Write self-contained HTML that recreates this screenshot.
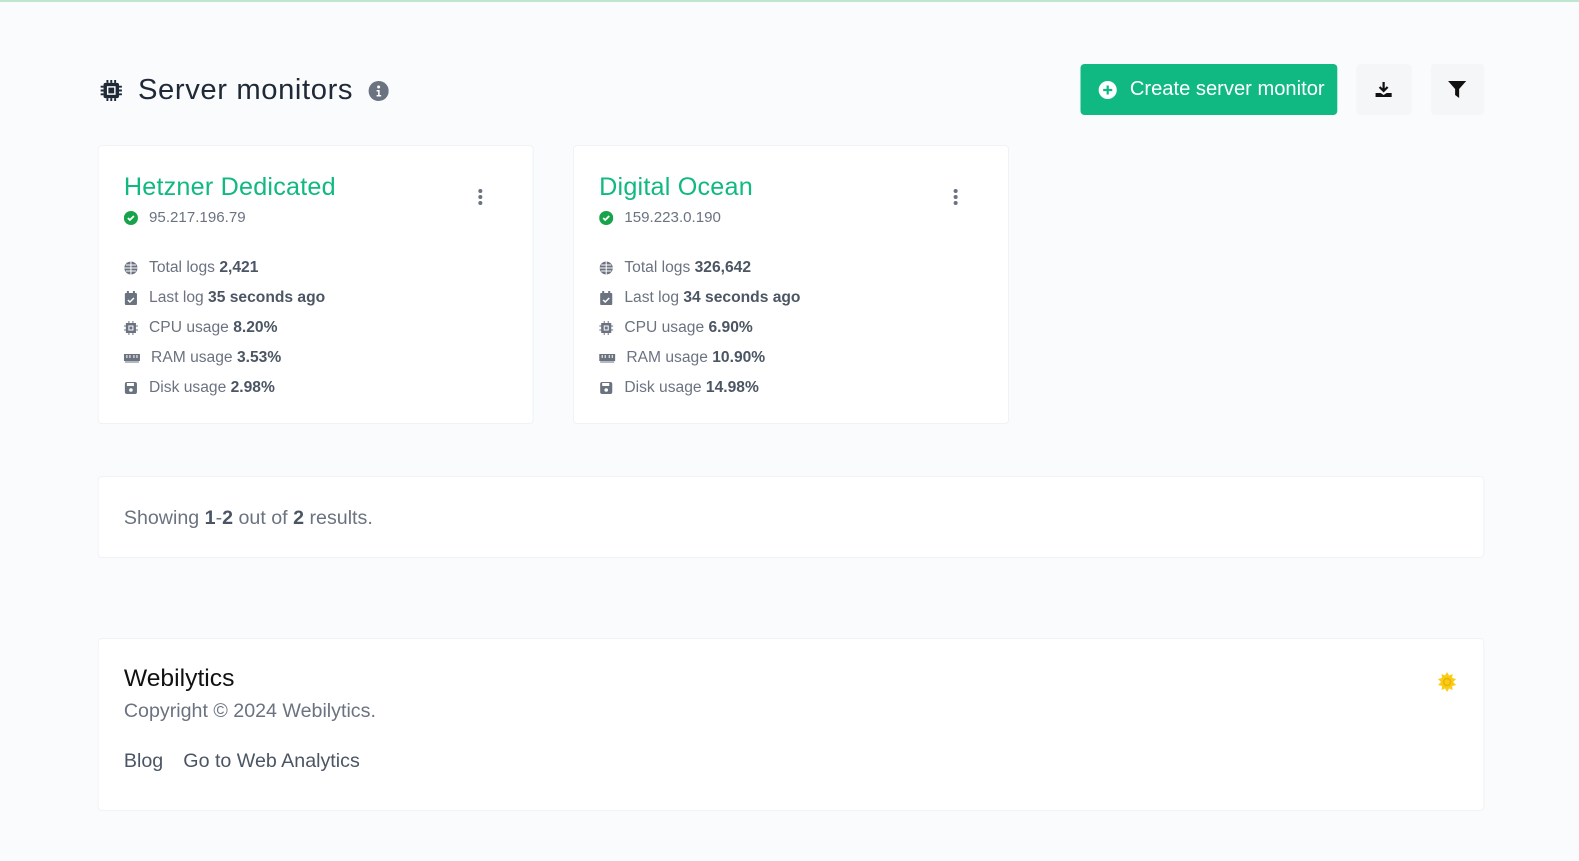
<!DOCTYPE html>
<html><head><meta charset="utf-8"><style>
*{box-sizing:border-box;margin:0;padding:0}
body{width:1579px;height:861px;background:#f9fbfd;font-family:"Liberation Sans",sans-serif;color:#4b5563;position:relative;overflow:hidden;border-top:2px solid #bfe6cf}
#w{position:absolute;left:0;top:0;width:1568px;height:855px;transform:scale(1.007,1);transform-origin:0 0}
.abs{position:absolute}
.card{position:absolute;background:#fff;border:1px solid #f0f2f5;border-radius:4px}
h1{position:absolute;left:137px;top:72px;font-size:29px;font-weight:400;color:#1f2937;letter-spacing:0.6px}
.name{position:absolute;left:25px;top:27px;font-size:25px;color:#10b981;letter-spacing:0.2px}
.ip{position:absolute;left:25px;top:63px;font-size:15px;color:#6b7280;display:flex;align-items:center;gap:11px}
.row{position:absolute;left:25px;font-size:15.5px;color:#6b7280;display:flex;align-items:center;gap:11px}
.row b{color:#4b5563}
.dots{position:absolute;left:377px;top:43px;width:4px}
.dots i{display:block;width:4px;height:4px;border-radius:2px;background:#6b7280;margin-bottom:2px}
</style></head><body><div id="w">
<svg class="abs" style="left:99px;top:77px" width="23" height="23" viewBox="0 0 24 24"><rect x="4" y="4" width="16" height="16" rx="2" fill="#1f2937"/><rect x="7.5" y="7.5" width="9" height="9" fill="#fff"/><rect x="9" y="9" width="6" height="6" fill="#1f2937"/><g stroke="#1f2937" stroke-width="2"><path d="M8 1v3M12 1v3M16 1v3M8 20v3M12 20v3M16 20v3M1 8h3M1 12h3M1 16h3M20 8h3M20 12h3M20 16h3"/></g></svg>
<h1>Server monitors</h1>
<svg class="abs" style="left:366px;top:79px" width="20" height="20" viewBox="0 0 20 20"><circle cx="10" cy="10" r="10" fill="#6b7280"/><circle cx="10" cy="6" r="1.5" fill="#fff"/><path d="M8 9h3v5h1.5v1.5h-4.5V14H9.5v-3.5H8z" fill="#fff"/></svg>
<div class="abs" style="left:1073px;top:62px;width:255px;height:51px;background:#10b981;border-radius:4px;color:#fff;font-size:20px;display:flex;align-items:center;padding-left:17px;gap:12px"><svg width="20" height="20" viewBox="0 0 20 20"><circle cx="10" cy="10" r="9" fill="#fff"/><path d="M10 5.5v9M5.5 10h9" stroke="#10b981" stroke-width="2.2"/></svg>Create server monitor</div>
<div class="abs" style="left:1347px;top:62px;width:55px;height:51px;background:#f5f6f8;border-radius:4px"><svg class="abs" style="left:18px;top:17px" width="18" height="18" viewBox="0 0 18 18"><path d="M9 1v9M5 6l4 4 4-4" stroke="#111" stroke-width="2.2" fill="none"/><path d="M1 12h5l3 2 3-2h5v4H1z" fill="#111"/></svg></div>
<div class="abs" style="left:1421px;top:62px;width:53px;height:51px;background:#f5f6f8;border-radius:4px"><svg class="abs" style="left:17px;top:17px" width="18" height="17" viewBox="0 0 18 17"><path d="M0 0h18l-7 8v9l-4-3V8z" fill="#111"/></svg></div>

<div class="card" style="left:97px;top:143px;width:433px;height:279px">
<div class="name">Hetzner Dedicated</div>
<div class="dots"><i></i><i></i><i></i></div>
<div class="ip"><svg width="14" height="14"><circle cx="7" cy="7" r="7" fill="#16a34a"/><path d="M4 7l2 2 4-4" stroke="#fff" stroke-width="1.8" fill="none"/></svg>95.217.196.79</div>
<div class="row" style="top:113px"><svg width="14" height="14" viewBox="0 0 14 14"><circle cx="7" cy="7" r="6.5" fill="#6b7280"/><path d="M0.5 7h13M7 .5v13M2 4h10M2 10h10" stroke="#fff" stroke-width="1"/></svg><span>Total logs <b>2,421</b></span></div>
<div class="row" style="top:143px"><svg width="14" height="14"><rect x="1" y="2" width="12" height="12" rx="1" fill="#6b7280"/><rect x="3" y="0" width="2" height="3" fill="#6b7280"/><rect x="9" y="0" width="2" height="3" fill="#6b7280"/><path d="M4 9l2 2 4-4" stroke="#fff" stroke-width="1.5" fill="none"/></svg><span>Last log <b>35 seconds ago</b></span></div>
<div class="row" style="top:173px"><svg width="14" height="14"><rect x="2" y="2" width="10" height="10" fill="#6b7280"/><path d="M5 0v14M9 0v14M0 5h14M0 9h14" stroke="#6b7280" stroke-width="1"/><rect x="4.5" y="4.5" width="5" height="5" fill="#fff"/><rect x="5.5" y="5.5" width="3" height="3" fill="#6b7280"/></svg><span>CPU usage <b>8.20%</b></span></div>
<div class="row" style="top:203px"><svg width="16" height="14"><rect x="0" y="3" width="16" height="7" fill="#6b7280"/><path d="M3 4v3M6 4v3M10 4v3M13 4v3" stroke="#fff"/><path d="M1 11h14" stroke="#6b7280"/></svg><span>RAM usage <b>3.53%</b></span></div>
<div class="row" style="top:233px"><svg width="14" height="14"><rect x="1" y="1" width="12" height="12" rx="2" fill="#6b7280"/><rect x="3" y="2" width="7" height="3" fill="#fff"/><circle cx="7" cy="9" r="1.8" fill="#fff"/></svg><span>Disk usage <b>2.98%</b></span></div>
</div>

<div class="card" style="left:569px;top:143px;width:433px;height:279px">
<div class="name">Digital Ocean</div>
<div class="dots"><i></i><i></i><i></i></div>
<div class="ip"><svg width="14" height="14"><circle cx="7" cy="7" r="7" fill="#16a34a"/><path d="M4 7l2 2 4-4" stroke="#fff" stroke-width="1.8" fill="none"/></svg>159.223.0.190</div>
<div class="row" style="top:113px"><svg width="14" height="14" viewBox="0 0 14 14"><circle cx="7" cy="7" r="6.5" fill="#6b7280"/><path d="M0.5 7h13M7 .5v13M2 4h10M2 10h10" stroke="#fff" stroke-width="1"/></svg><span>Total logs <b>326,642</b></span></div>
<div class="row" style="top:143px"><svg width="14" height="14"><rect x="1" y="2" width="12" height="12" rx="1" fill="#6b7280"/><rect x="3" y="0" width="2" height="3" fill="#6b7280"/><rect x="9" y="0" width="2" height="3" fill="#6b7280"/><path d="M4 9l2 2 4-4" stroke="#fff" stroke-width="1.5" fill="none"/></svg><span>Last log <b>34 seconds ago</b></span></div>
<div class="row" style="top:173px"><svg width="14" height="14"><rect x="2" y="2" width="10" height="10" fill="#6b7280"/><path d="M5 0v14M9 0v14M0 5h14M0 9h14" stroke="#6b7280" stroke-width="1"/><rect x="4.5" y="4.5" width="5" height="5" fill="#fff"/><rect x="5.5" y="5.5" width="3" height="3" fill="#6b7280"/></svg><span>CPU usage <b>6.90%</b></span></div>
<div class="row" style="top:203px"><svg width="16" height="14"><rect x="0" y="3" width="16" height="7" fill="#6b7280"/><path d="M3 4v3M6 4v3M10 4v3M13 4v3" stroke="#fff"/><path d="M1 11h14" stroke="#6b7280"/></svg><span>RAM usage <b>10.90%</b></span></div>
<div class="row" style="top:233px"><svg width="14" height="14"><rect x="1" y="1" width="12" height="12" rx="2" fill="#6b7280"/><rect x="3" y="2" width="7" height="3" fill="#fff"/><circle cx="7" cy="9" r="1.8" fill="#fff"/></svg><span>Disk usage <b>14.98%</b></span></div>
</div>

<div class="card" style="left:97px;top:474px;width:1377px;height:82px">
<div class="abs" style="left:25px;top:30px;font-size:19.5px;color:#6b7280">Showing <b style="color:#4b5563">1</b>-<b style="color:#4b5563">2</b> out of <b style="color:#4b5563">2</b> results.</div>
</div>

<div class="card" style="left:97px;top:636px;width:1377px;height:173px">
<div class="abs" style="left:25px;top:26px;font-size:24.5px;color:#111">Webilytics</div>
<div class="abs" style="left:25px;top:61px;font-size:19.5px;color:#6b7280">Copyright © 2024 Webilytics.</div>
<div class="abs" style="left:25px;top:111px;font-size:19.5px;color:#4b5563">Blog<span style="margin-left:20px">Go to Web Analytics</span></div>
<svg class="abs" style="left:1329px;top:33px" width="20" height="20" viewBox="0 0 20 20"><path d="M10 0l2 3.5 3.5-1.5-.5 4 4 1-3 3 3 3-4 1 .5 4-3.5-1.5L10 20l-2-3.5-3.5 1.5.5-4-4-1 3-3-3-3 4-1-.5-4L8 3.5z" fill="#facc15"/><circle cx="10" cy="10" r="3.5" fill="none" stroke="#eab308" stroke-width="1.5"/></svg>
</div>
</div></body></html>
